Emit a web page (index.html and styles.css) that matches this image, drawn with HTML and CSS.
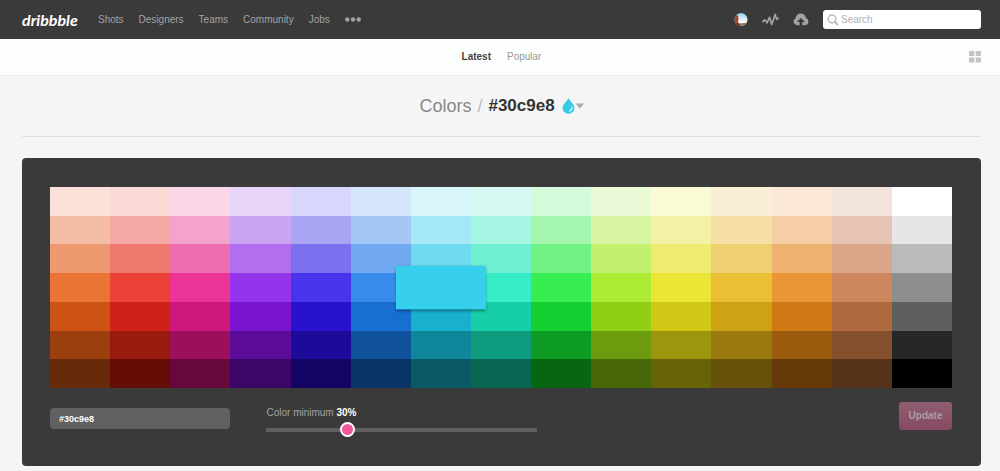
FILE: index.html
```html
<!DOCTYPE html>
<html lang="en">
<head>
<meta charset="utf-8">
<meta name="viewport" content="width=device-width, initial-scale=1">
<title>Colors / #30c9e8</title>
<link rel="stylesheet" href="styles.css">
</head>
<body>
<header class="topbar">
  <a class="logo" href="#">dribbble</a>
  <nav class="nav" aria-label="Main">
    <a href="#">Shots</a>
    <a href="#">Designers</a>
    <a href="#">Teams</a>
    <a href="#">Community</a>
    <a href="#">Jobs</a>
    <a class="more" href="#" aria-label="More"><svg width="16" height="6" viewBox="0 0 16 6"><circle cx="2.3" cy="2.500" r="2.200"/><circle cx="8" cy="2.500" r="2.200"/><circle cx="13.7" cy="2.500" r="2.200"/></svg></a>
  </nav>
  <div class="tools">
    <a href="#" aria-label="Profile">
      <svg width="14" height="14" viewBox="0 0 14 14">
        <defs>
          <clipPath id="face"><circle cx="7" cy="6.500" r="6.500"/></clipPath>
          <linearGradient id="sky" x1="0" y1="0" x2="0" y2="1"><stop offset="0" stop-color="#8ecbe6"/><stop offset=".4" stop-color="#d8edf5"/><stop offset=".7" stop-color="#fff"/></linearGradient>
        </defs>
        <g clip-path="url(#face)"><rect width="14" height="14" fill="url(#sky)"/><path d="M0 2L4 2.500 4.500 6 4 9 5.500 11 0 14z" fill="#a5402f"/><path d="M2 14L4.500 10.500 9 10 14 9.800V14z" fill="#a07a58"/><path d="M0 10l5 .5 2 3.500H0z" fill="#6a2f2a"/></g>
      </svg>
    </a>
    <a href="#" aria-label="Activity"><svg width="17" height="14" viewBox="0 0 17 14"><path d="M.8 8.500l2-1.700 2.200 3L7.500 4.300l2.200 7.200L13.200 1.500l1.500 5 1.500-1.500" fill="none" stroke="#a3a3a3" stroke-width="1.700" stroke-linejoin="round" stroke-linecap="round"/></svg></a>
    <a href="#" aria-label="Upload"><svg width="16" height="13" viewBox="0 0 16 13"><path fill="#a3a3a3" fill-rule="evenodd" d="M4 12.200A3.700 3.700 0 0 1 2.600 5.200 5 5 0 0 1 7.800.5a5.100 5.100 0 0 1 5 4.500A3.700 3.700 0 0 1 12 12.200H9.300V9H12L7.900 4.900 3.900 9H6.600V12.200z"/></svg></a>
    <form class="search" role="search">
      <svg width="12" height="12" viewBox="0 0 12 12"><circle cx="5" cy="5" r="3.900" fill="none" stroke="#bbb" stroke-width="1.500"/><path d="M8 8l2.500 2.500" stroke="#bbb" stroke-width="2" stroke-linecap="round"/></svg>
      <input type="search" placeholder="Search" aria-label="Search">
    </form>
  </div>
</header>
<div class="subnav">
  <nav class="tabs" aria-label="Sort">
    <a class="current" href="#">Latest</a>
    <a href="#">Popular</a>
  </nav>
  <button class="layout" type="button" aria-label="Grid layout"><svg width="12" height="12" viewBox="0 0 12 12"><path d="M0 0h5.300v5H0zM6.700 0H12v5H6.700zM0 6.500h5.300v5H0zM6.700 6.500H12v5H6.700z" fill="#c3c3c3"/></svg></button>
</div>
<main class="page">
  <h1 class="title">
    <a href="#">Colors</a><span class="slash">/</span><strong>#30c9e8</strong>
    <button class="drop" type="button" aria-label="Choose color"><svg width="22" height="16" viewBox="0 0 22 16"><path d="M6.500.3C8.500 4 12.500 6.300 12.500 10A6 5.800 0 0 1 .5 10C.5 6.300 4.500 4 6.500.3z" fill="#37cbea"/><path d="M7.200 13.300c2-.5 3.300-2 3-4.600-.5 1.800-1.500 3-3 4.600z" fill="#e8f8fc" stroke="#e8f8fc" stroke-width=".8"/><path d="M13.500 5.500H22L17.800 10.500z" fill="#aaa"/></svg></button>
  </h1>
  <section class="panel" aria-label="Color picker">
    <div class="palette" id="palette"></div>
    <form class="controls">
      <input class="hex" type="text" value="#30c9e8" aria-label="Hex color">
      <div class="minimum">
        <label for="minimum">Color minimum <b>30%</b></label>
        <input id="minimum" type="range" min="0" max="100" value="30">
      </div>
      <button class="update" type="submit" disabled>Update</button>
    </form>
  </section>
</main>
<script src="palette.js"></script>
</body>
</html>
```
FILE: styles.css
```css
* { box-sizing: border-box; }
body {
  margin: 0;
  background: #f5f5f5;
  color: #333;
  font: 10px/14px "Liberation Sans", Arial, sans-serif;
}
a { color: inherit; text-decoration: none; }
svg { display: block; }
button, input { font: inherit; margin: 0; border: 0; }
button { padding: 0; background: none; cursor: pointer; }

.topbar {
  display: flex;
  align-items: center;
  height: 39px;
  padding: 0 19px 0 22px;
  background: #3a3a3a;
  color: #a3a3a3;
}
.logo {
  width: 76px;
  color: #fff;
  font: italic 700 16px/20px Lato, sans-serif;
}
.nav { display: flex; align-items: center; gap: 15px; }
.more { fill: #a3a3a3; }
.tools { display: flex; align-items: center; gap: 14px; margin-left: auto; }
.search {
  display: flex;
  align-items: center;
  gap: 2px;
  width: 158px;
  height: 19px;
  padding: 0 4px;
  border-radius: 3px;
  background: #fff;
}
.search input {
  flex: 1;
  min-width: 0;
  padding: 0;
  background: none;
  outline: 0;
  color: #333;
}
.search input::placeholder { color: #b0b0b0; opacity: 1; }

.subnav {
  display: grid;
  grid-template-columns: 1fr auto 1fr;
  align-items: center;
  height: 37px;
  padding: 0 19px 0 22px;
  border-bottom: 1px solid #ebebeb;
  background: #fcfefd;
}
.tabs { display: flex; gap: 16px; grid-column: 2; color: #999; }
.tabs .current { color: #444; font-weight: 700; }
.layout { justify-self: end; }

.page { padding: 0 19px 5px 22px; }
.title {
  display: flex;
  align-items: center;
  justify-content: center;
  height: 61px;
  margin: 0 0 21px;
  border-bottom: 1px solid #e0e0e0;
  color: #888;
  font-size: 18px;
  font-weight: 400;
  line-height: 24px;
}
.title strong { color: #333; font-size: 17px; }
.slash { margin: 0 6px; color: #bbb; }
.drop { margin-left: 7px; }

.panel {
  padding: 29px 29px 29px 28px;
  border-radius: 4px;
  background: #3a3a3a;
}
.palette {
  display: grid;
  grid-template-columns: repeat(15, 1fr);
  grid-template-rows: repeat(7, 1fr);
  height: 201px;
}
.swatch.selected {
  position: relative;
  transform: scale(1.5);
  box-shadow: 0 1px 2px rgba(0, 0, 0, .4);
}

.controls {
  display: grid;
  grid-template-columns: 20% 30% 1fr;
  column-gap: 4%;
  align-items: start;
  margin-top: 14px;
}
.hex {
  width: 100%;
  height: 21px;
  margin-top: 6px;
  padding: 0 9px;
  border-radius: 4px;
  background: #606060;
  color: #fff;
  font-size: 9px;
  font-weight: 700;
}
.minimum { display: flex; flex-direction: column; margin-top: 4px; color: #a3a3a3; }
.minimum b { color: #fff; }
.minimum input {
  appearance: none;
  height: 15px;
  margin: 2px -7px 0;
  background: linear-gradient(#606060, #606060) center / calc(100% - 14px) 4px no-repeat;
}
.minimum input::-webkit-slider-thumb {
  appearance: none;
  width: 15px;
  height: 15px;
  border: 2px solid #fff;
  border-radius: 50%;
  background: #f0569a;
}
.update {
  justify-self: end;
  width: 53px;
  height: 28px;
  border-radius: 3px;
  background: linear-gradient(#8f5e72, #874963);
  color: #aa9da3;
  font-weight: 700;
}
```
FILE: palette.js
```js
const rows = [
  "fce1d8 fbd9d5 fbd6e7 e7d6fa d9d6fb d5e5fc d7f5fb d6faf3 d6fadc ebfad6 fafad6 faefd6 fae7d6 f3e4dc ffffff",
  "f4bda6 f4a8a4 f4a4cc cca4f4 aaa4f4 a5c7f5 a5e8f5 a4f5e2 a4f5ae d8f5a4 f5f1a4 f5dfa4 f5cea6 e6c4b4 e6e6e6",
  "ef9971 ef786f ef6eb1 b16eef 7c70ef 70a9ef 70dbef 70f0d3 70f181 c3f06f efeb70 efd070 efb170 daa68a bababa",
  "e97436 eb4136 eb3496 9434eb 4a34eb 378beb 37cfee 37edc7 37ee52 adec35 ebe535 ebbf35 eb9636 cd875c 8e8e8e",
  "cc5315 cf2117 cf167b 7a14ce 2912ce 176fcf 17b1cf 16cfa8 15cf32 90cf15 cfc916 cea215 cf7914 b0693d 5f5f5f",
  "9b3f0f 9a1a0d 9b0f5c 5b0d9a 1e0a99 0f529b 10869b 0e9b7e 0e9b24 6c9b0e 9b960e 9b7a0d 9b5c0d 844f2d 272727",
  "672a0a 660d08 67083a 3b0667 120566 093567 095966 086752 086613 476708 676408 675108 673909 58331c 000000"
];
const selected = "37cfee";
const palette = document.getElementById("palette");

for (const color of rows.join(" ").split(" ")) {
  const swatch = document.createElement("button");
  swatch.type = "button";
  swatch.className = color === selected ? "swatch selected" : "swatch";
  swatch.style.backgroundColor = "#" + color;
  swatch.setAttribute("aria-label", "#" + color);
  palette.append(swatch);
}
```
